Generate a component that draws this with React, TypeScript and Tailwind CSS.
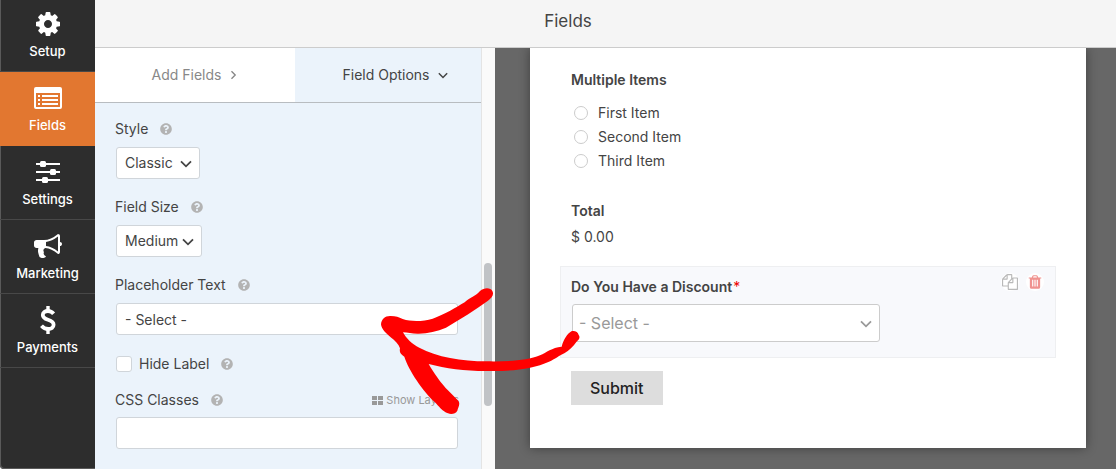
import { type ReactNode } from "react";
import { FaQuestionCircle } from "react-icons/fa";

const COG =
  "M1152 896q0-106-75-181t-181-75-181 75-75 181 75 181 181 75 181-75 75-181zm512-109v222q0 12-8 23t-20 13l-185 28q-19 54-39 91 35 50 107 138 10 12 10 25t-9 23q-27 37-99 108t-94 71q-12 0-26-9l-138-108q-44 23-91 38-16 136-29 186-7 28-36 28h-222q-14 0-24.5-8.5t-11.5-21.5l-28-184q-49-16-90-37l-141 107q-10 9-25 9-14 0-25-11-126-114-165-168-7-10-7-23 0-12 8-23 15-21 51-66.5t54-70.5q-27-50-41-99l-183-27q-13-2-21-12.5t-8-23.5v-222q0-12 8-23t19-13l186-28q14-46 39-92-40-57-107-138-10-12-10-24 0-10 9-23 26-36 98.5-107.5t94.5-71.5q13 0 26 10l138 107q44-23 91-38 16-136 29-186 7-28 36-28h222q14 0 24.5 8.5t11.5 21.5l28 184q49 16 90 37l142-107q9-9 24-9 13 0 25 10 129 119 165 170 7 8 7 22 0 12-8 23-15 21-51 66.5t-54 70.5q26 50 41 98l183 28q13 2 21 12.5t8 23.5z";
const BULLHORN =
  "M1664 640q53 0 90.5 37.5t37.5 90.5-37.5 90.5-90.5 37.5v384q0 52-38 90t-90 38q-417-347-812-380-58 19-91 66t-31 100.5 40 92.5q-20 33-23 65.5t6 58 33.5 55 48 50 61.5 50.5q-29 58-111.5 83t-168.5 11.5-132-55.5q-7-23-29.5-87.5t-32-94.5-23-89-15-101 3.5-98.5 22-110.5h-122q-66 0-113-47t-47-113v-192q0-66 47-113t113-47h480q435 0 896-384 52 0 90 38t38 90v384zm-128 604v-954q-394 302-768 343v270q377 42 768 341z";
const FILES =
  "M1696 384q40 0 68 28t28 68v1216q0 40-28 68t-68 28h-960q-40 0-68-28t-28-68v-288h-544q-40 0-68-28t-28-68v-672q0-40 20-88t48-76l408-408q28-28 76-48t88-20h416q40 0 68 28t28 68v328q68-40 128-40h416zm-544 213l-299 299h299v-299zm-640-384l-299 299h299v-299zm196 647l316-316v-416h-384v416q0 40-28 68t-68 28h-416v640h512v-256q0-40 20-88t48-76zm956 804v-1152h-384v416q0 40-28 68t-68 28h-416v640h896z";
const TRASH =
  "M704 1376v-704q0-14-9-23t-23-9h-64q-14 0-23 9t-9 23v704q0 14 9 23t23 9h64q14 0 23-9t9-23zm256 0v-704q0-14-9-23t-23-9h-64q-14 0-23 9t-9 23v704q0 14 9 23t23 9h64q14 0 23-9t9-23zm256 0v-704q0-14-9-23t-23-9h-64q-14 0-23 9t-9 23v704q0 14 9 23t23 9h64q14 0 23-9t9-23zm-544-992h448l-48-117q-7-9-17-11h-317q-10 2-17 11zm928 32v64q0 14-9 23t-23 9h-96v948q0 83-47 143.5t-113 60.5h-832q-66 0-113-58.5t-47-141.5v-952h-96q-14 0-23-9t-9-23v-64q0-14 9-23t23-9h309l70-167q15-37 54-63t79-26h320q40 0 79 26t54 63l70 167h309q14 0 23 9t9 23z";

function Glyph({ d, className }: { d: string; className: string }) {
  return (
    <svg viewBox="0 0 1792 1792" fill="currentColor" className={className} aria-hidden="true">
      <path d={d} />
    </svg>
  );
}

function ListIcon() {
  return (
    <svg viewBox="0 0 28 22" className="h-[22px] w-7" aria-hidden="true">
      <path
        fill="currentColor"
        fillRule="evenodd"
        d="M2 0h24a2 2 0 0 1 2 2v18a2 2 0 0 1-2 2H2a2 2 0 0 1-2-2V2a2 2 0 0 1 2-2zM2 6v13.4q0 .6.6.6h22.8q.6 0 .6-.6V6z"
      />
      <path fill="currentColor" d="M4 8h2v2H4zM8 8h16v2H8zM4 12h2v2H4zM8 12h16v2H8zM4 16h2v2H4zM8 16h16v2H8z" />
    </svg>
  );
}

function SlidersIcon() {
  return (
    <svg viewBox="0 0 24 24" fill="currentColor" className="h-6 w-6" aria-hidden="true">
      <path d="M0 3h24v2H0zM0 11h24v2H0zM0 19h24v2H0z" />
      <rect x="4" y="1" width="6" height="6" rx="1.5" />
      <rect x="14" y="9" width="6" height="6" rx="1.5" />
      <rect x="6" y="17" width="6" height="6" rx="1.5" />
    </svg>
  );
}

function DollarIcon() {
  return (
    <svg viewBox="0 0 16 28" className="h-7 w-4" fill="none" stroke="currentColor" aria-hidden="true">
      <path d="M8 0v5M8 23v5" strokeWidth="3.4" />
      <path
        d="M13.6 7.8C12 5.800 10.200 5 8 5c-3 0-5.200 1.500-5.200 4 0 2.900 2.500 3.900 5.200 4.800 3.100 1 5.600 2.200 5.600 4.900 0 2.800-2.400 4.300-5.400 4.300-2.800 0-5-1.200-6.700-3.200"
        strokeWidth="3.800"
      />
    </svg>
  );
}

function Chevron({ className }: { className: string }) {
  return (
    <svg viewBox="0 0 12 8" fill="none" stroke="currentColor" strokeWidth="1.800" className={className} aria-hidden="true">
      <path d="M1 1.300 6 6.300l5-5" />
    </svg>
  );
}

function NavItem({ label, active, children }: { label: string; active?: boolean; children: ReactNode }) {
  return (
    <a
      href={"#" + label.toLowerCase()}
      className={
        "flex h-[74px] flex-col items-center border-b pt-3 text-white " +
        (active ? "border-[#e27730] bg-[#e27730]" : "border-[#484848]")
      }
    >
      <span className="flex h-7 items-center">{children}</span>
      <span className="mt-[3px] text-[13px] leading-5 font-medium">{label}</span>
    </a>
  );
}

function Help() {
  return (
    <button type="button" aria-label="Help" className="text-[#b3b3b3]">
      <FaQuestionCircle className="h-3 w-3" />
    </button>
  );
}

function Select({ id, value, className }: { id: string; value: string; className: string }) {
  return (
    <div className={"relative mx-px " + className}>
      <select
        id={id}
        className="h-8 w-full appearance-none rounded-[3px] border border-[#d0d5da] bg-white pl-2 text-sm text-[#444]"
      >
        <option>{value}</option>
      </select>
      <Chevron className="pointer-events-none absolute top-[13px] right-2 h-2 w-3 text-[#444]" />
    </div>
  );
}

const textBox =
  "mx-px h-8 rounded-[3px] border border-[#d0d5da] bg-white px-2 text-sm text-[#444]";

function FieldOptions() {
  return (
    <form className="flex flex-col gap-[18px] py-4 pr-[36px] pl-5 text-sm leading-5 text-[#444]">
      <div className="flex flex-col gap-2">
        <div className="flex items-center gap-3">
          <label htmlFor="style">Style</label>
          <Help />
        </div>
        <Select id="style" value="Classic" className="w-[84px]" />
      </div>
      <div className="flex flex-col gap-2">
        <div className="flex items-center gap-3">
          <label htmlFor="size">Field Size</label>
          <Help />
        </div>
        <Select id="size" value="Medium" className="w-[86px]" />
      </div>
      <div className="flex flex-col gap-2">
        <div className="flex items-center gap-3">
          <label htmlFor="placeholder">Placeholder Text</label>
          <Help />
        </div>
        <input id="placeholder" type="text" defaultValue="- Select -" className={textBox} />
      </div>
      <div className="flex flex-col gap-4">
        <div className="flex h-[22px] items-center gap-3">
          <span className="flex items-center gap-[6px]">
            <input
              id="hide"
              type="checkbox"
              className="mx-px h-4 w-4 appearance-none rounded-[3px] border border-[#d0d5da] bg-white"
            />
            <label htmlFor="hide">Hide Label</label>
          </span>
          <Help />
        </div>
        <div className="flex flex-col gap-2">
          <div className="flex h-[18px] items-center gap-3">
            <label htmlFor="css">CSS Classes</label>
            <Help />
            <a href="#layouts" className="ml-auto flex items-center gap-[3px] text-[11px] text-[#999]">
              <svg viewBox="0 0 11 9" fill="currentColor" className="h-[9px] w-[11px]" aria-hidden="true">
                <path d="M0 0h5v4H0zM6 0h5v4H6zM0 5h5v4H0zM6 5h5v4H6z" />
              </svg>
              Show Layouts
            </a>
          </div>
          <input id="css" type="text" className={textBox} />
        </div>
      </div>
    </form>
  );
}

function Preview() {
  return (
    <main className="flex-1 overflow-hidden bg-[#676767] pr-[30px] pb-[21px] pl-[35px]">
      <form className="flex h-full flex-col bg-white px-[30px] pt-[22px] text-sm text-[#444] shadow-[0_0_10px_rgba(0,0,0,0.4)]">
        <fieldset className="px-[11px]">
          <legend className="leading-5 font-semibold">Multiple Items</legend>
          <div className="flex flex-col pt-[11px]">
            {["First Item", "Second Item", "Third Item"].map((item) => (
              <label key={item} className="flex h-6 items-center gap-[10px]">
                <input
                  type="radio"
                  name="items"
                  className="ml-[3px] h-[14px] w-[14px] appearance-none rounded-full border border-[#ccc] bg-white"
                />
                {item}
              </label>
            ))}
          </div>
        </fieldset>
        <section className="mt-7 px-[11px] leading-5">
          <h3 className="font-semibold">Total</h3>
          <p className="mt-[6px]">$ 0.00</p>
        </section>
        <section className="mt-[19px] flex h-[92px] items-start justify-between border border-[#eeeff1] bg-[#f8f9fc] px-[10px] pt-[10px]">
          <div className="w-[310px]">
            <label htmlFor="discount" className="block leading-5 font-semibold">
              Do You Have a Discount<span className="ml-px font-normal text-[#e00]">*</span>
            </label>
            <div className="relative mx-px mt-[7px]">
              <select
                id="discount"
                className="h-[38px] w-full appearance-none rounded-[3px] border border-[#ccc] bg-white pl-[6px] text-base text-[#999]"
              >
                <option>- Select -</option>
              </select>
              <Chevron className="pointer-events-none absolute top-4 right-2 h-2 w-3 text-[#999]" />
            </div>
          </div>
          <div className="-mt-1 mr-px flex gap-[7px]">
            <button
              type="button"
              aria-label="Duplicate field"
              className="flex h-[18px] w-[18px] items-center justify-center rounded-full bg-white text-[#b9b9b9]"
            >
              <Glyph d={FILES} className="h-4 w-4 shrink-0" />
            </button>
            <button
              type="button"
              aria-label="Delete field"
              className="flex h-[18px] w-[18px] items-center justify-center rounded-full bg-white text-[#f0928f]"
            >
              <Glyph d={TRASH} className="h-4 w-4 shrink-0" />
            </button>
          </div>
        </section>
        <button
          type="button"
          className="mx-[11px] mt-[13px] h-[34px] self-start bg-[#ddd] px-[19px] text-base font-medium text-[#222]"
        >
          Submit
        </button>
      </form>
    </main>
  );
}

export default function App() {
  return (
    <div className="relative flex h-screen min-h-[469px] overflow-hidden bg-[#f5f5f5] font-['Inter',sans-serif]">
      <nav className="-mt-0.5 flex w-[95px] shrink-0 flex-col rounded-bl-[4px] bg-[#2d2d2d] shadow-[inset_1px_-1px_0_#5a5a5a]">
        <NavItem label="Setup">
          <Glyph d={COG} className="h-7 w-7" />
        </NavItem>
        <NavItem label="Fields" active>
          <ListIcon />
        </NavItem>
        <NavItem label="Settings">
          <SlidersIcon />
        </NavItem>
        <NavItem label="Marketing">
          <Glyph d={BULLHORN} className="h-7 w-7" />
        </NavItem>
        <NavItem label="Payments">
          <DollarIcon />
        </NavItem>
      </nav>
      <div className="flex min-w-0 flex-1 flex-col">
        <header className="flex h-12 shrink-0 items-center justify-center border-b border-[#ccc] bg-[#f5f5f5] pr-[75px] pb-[3px] text-[17px] text-[#444]">
          <h1>Fields</h1>
        </header>
        <div className="flex min-h-0 flex-1">
          <aside className="relative w-[400px] shrink-0 bg-[#ebf3fb]">
            <div className="flex h-[55px] border-b border-[#b8bcc0] text-sm">
              <button type="button" className="flex flex-1 items-center justify-center gap-2 bg-white text-[#888]">
                Add Fields
                <Chevron className="h-[6px] w-[9px] -rotate-90" />
              </button>
              <button type="button" className="flex flex-1 items-center justify-center gap-2 text-[#444]">
                Field Options
                <Chevron className="h-[7px] w-[10px]" />
              </button>
            </div>
            <FieldOptions />
            <div className="absolute inset-y-0 right-0 w-[14px] border-l border-[#e4e4e4] bg-[#fafafa]">
              <div className="absolute top-[215px] right-[3px] h-[143px] w-2 rounded-full bg-[#c1c3c6]" />
            </div>
          </aside>
          <Preview />
        </div>
      </div>
      <svg
        viewBox="0 0 780 642"
        className="pointer-events-none absolute top-[255px] left-[340px] h-[214px] w-[260px]"
        aria-hidden="true"
      >
        <path
          fill="#f00"
          d="M123 208C124 192 136 182 152 183C168 183 176 186 188 192C216 201 250 199 278 191C318 177 346 158 374 142C390 127 410 122 420 108C434 96 452 98 457 108C463 119 455 129 444 137C405 166 360 192 318 218C290 229 260 237 232 236C216 236 202 233 189 232C197 248 216 268 238 278C290 306 365 319 440 319C505 320 562 317 600 301C620 292 635 278 665 275C670 255 681 237 694 229C704 226 714 231 716 240C722 248 716 254 709 261C700 274 687 287 673 295C656 302 646 313 627 320C580 341 520 349 450 348C380 349 320 341 266 327C280 352 302 384 326 408L355 437C362 447 354 458 352 467C347 477 333 479 324 475C307 469 296 453 284 441C250 410 205 345 193 305C180 297 178 290 180 280C176 268 165 256 152 247C139 235 124 223 123 208Z"
        />
      </svg>
    </div>
  );
}
